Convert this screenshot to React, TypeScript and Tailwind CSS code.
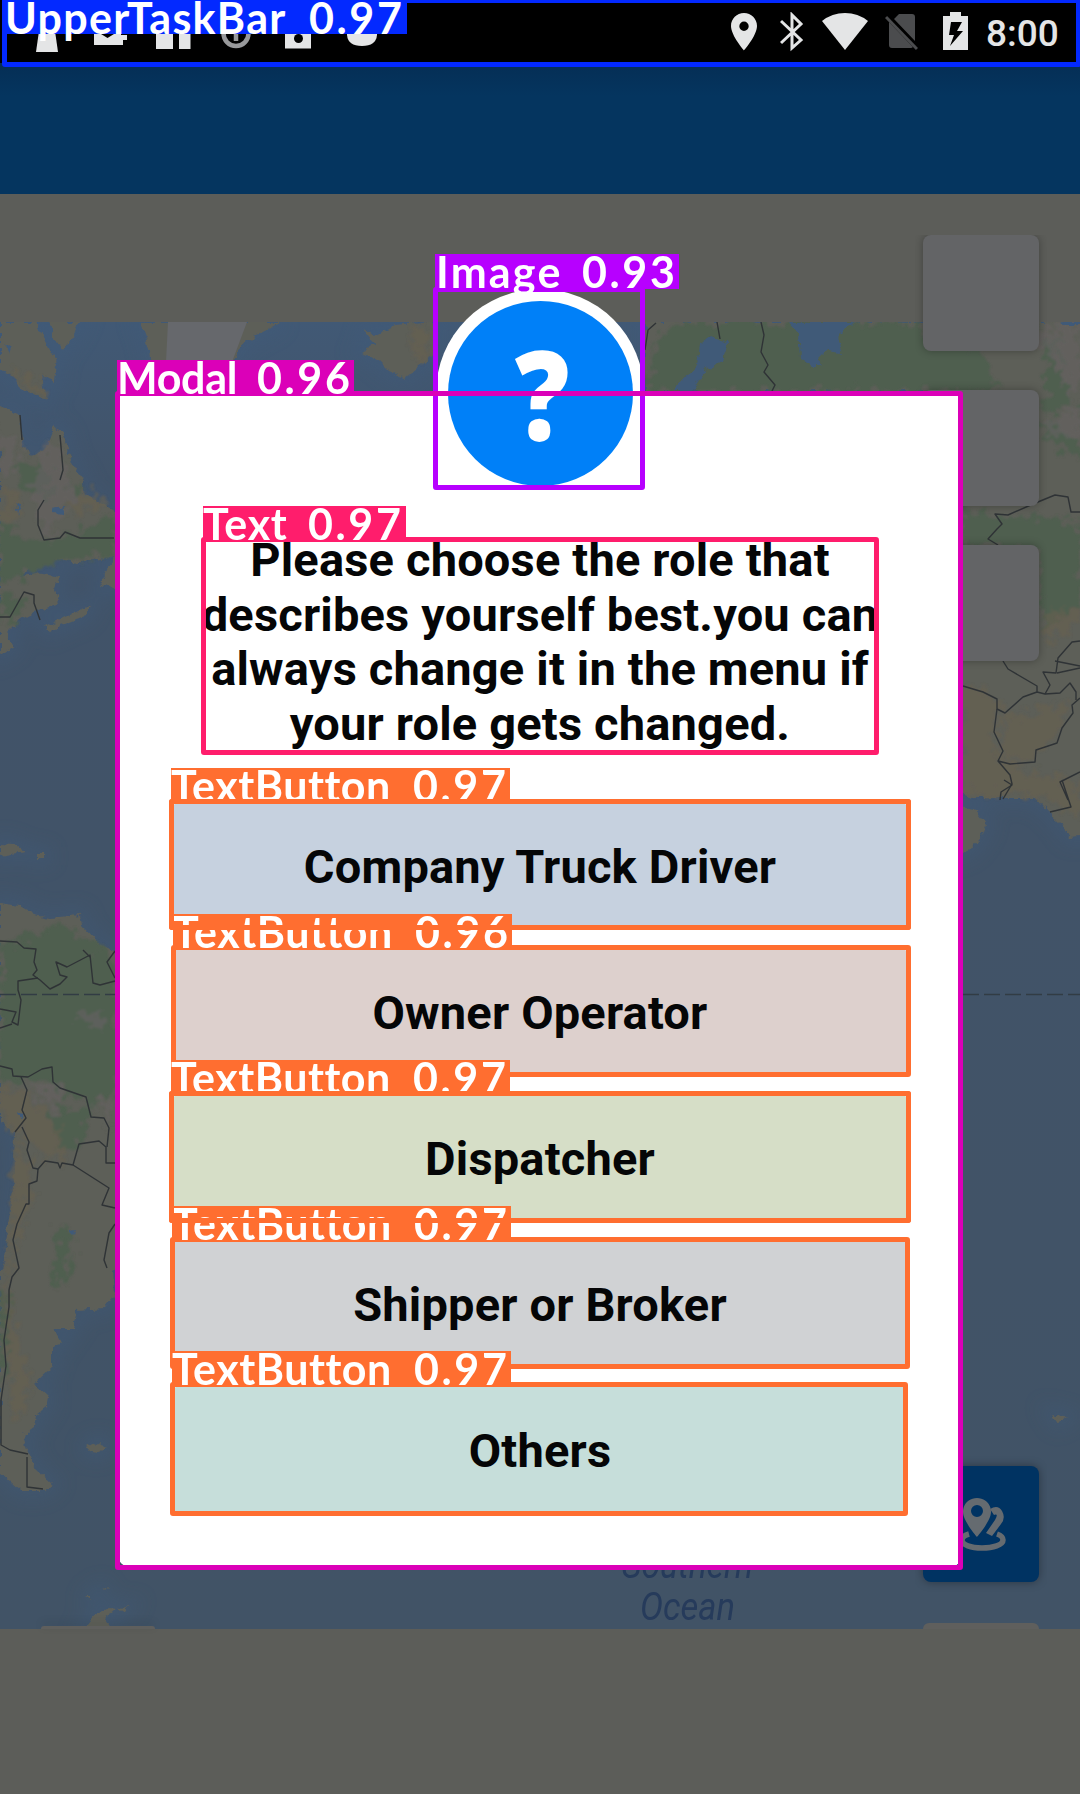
import React from "react";

const lands = [
  "M0 322H36L45 340 57 365 55 382 42 374 46 400 25 390 10 375 0 368Z",
  "M50 322H80L72 338 63 350 53 337Z",
  "M140 322H281L256 335 240 345 235 362H152L147 340Z",
  "M362 328L375 336 395 325 425 322 436 325V352L405 378 390 372 378 360 362 352 375 345Z",
  "M0 406L20 415 22 447 35 455 47 447 55 427 63 433 70 460 83 480V492L113 510 120 515V555L77 563 43 558 20 577 37 573 60 577 55 590 60 603 33 613 20 620 7 633 13 647 0 655Z",
  "M45 627L75 612 90 605 85 616 60 626 50 632Z",
  "M120 545L100 585 118 590Z",
  "M0 844L14 845 25 852 0 856Z",
  "M36 854H44V858H36Z",
  "M0 903L20 906 35 915 50 918 80 915 82 926 100 945 113 950 120 955V1265L112 1270 114 1295 104 1308 77 1310 73 1329 54 1329 62 1344 52 1348V1367L34 1384 48 1397 46 1408 36 1416 34 1427 23 1435 27 1450 36 1469 52 1484 43 1491 21 1491 0 1472V1273L5 1260 7 1233 13 1190 15 1133 0 1122Z",
  "M88 1447L97 1442 107 1446 100 1453 90 1452Z",
  "M84 1629L95 1615 107 1609 116 1610 104 1618 112 1629Z",
  "M118 1608L128 1607 124 1612Z",
  "M84 1597H92L90 1600Z",
  "M102 1589L108 1587 104 1591Z",
  "M1053 1414L1066 1417 1058 1422Z",
  "M645 322H1090V835L1070 837 1060 822 1047 810 1037 798H973L955 793V391H645Z",
  "M955 806L975 810 986 824 982 835 970 850 955 855Z",
];

const forests = [
  "M15 470L40 460 55 480 50 500 25 492Z",
  "M0 520L40 545 115 515V553L60 560 0 585Z",
  "M0 595L25 600 20 615 0 622Z",
  "M66 483L84 486 75 498Z",
  "M0 945L30 935 60 925 90 940 118 965V1090L90 1105 60 1090 40 1080 0 1080Z",
  "M50 1110L90 1110 80 1145 60 1150Z",
  "M58 1225L72 1235 68 1280 52 1290Z",
  "M0 1290L10 1300 6 1380 0 1390Z",
  "M662 330L690 322H790L920 325 980 350 1000 391H645Z",
  "M1045 345L1062 330 1058 370 1075 405 1045 412Z",
  "M1042 420L1080 440V460L1045 440Z",
  "M963 508L1000 515 1080 520V605L1042 630V548H963Z",
];

const dry = [
  "M15 370L40 380 45 398 25 388Z",
  "M0 490L20 495 15 520 0 525Z",
  "M70 495L90 490 105 505 75 515Z",
  "M410 330L425 325 430 350 415 365Z",
  "M0 1085L30 1095 60 1130 65 1165 40 1150 15 1133 0 1120Z",
  "M15 1140L30 1165 32 1195 18 1240 8 1300 30 1380 15 1430 5 1320 12 1230Z",
  "M963 680L1000 700 995 755 1030 775 1080 780V820L1040 795H963Z",
  "M1042 615L1080 605V625L1045 640Z",
  "M1000 720L1070 700 1055 740 1030 760 1005 760Z",
];

const settled = [
  "M0 430L18 440 20 470 0 468Z",
  "M45 440L60 445 75 500 50 535 30 500Z",
  "M78 1015L110 1010 95 1032Z",
  "M30 1090L65 1085 60 1110Z",
  "M98 1095L112 1100 108 1130Z",
  "M985 345L1080 322V370L1070 400 1050 350 1000 340Z",
  "M1045 430L1080 400V440Z",
];

const lakes = [
  "M712 336L728 343 723 361 707 368 693 391H674L697 365 700 345Z",
  "M788 322H853L837 338 842 353 827 351 817 361 823 366H812L800 357 798 334Z",
  "M53 508L63 506 62 514 54 513Z",
  "M16 503L20 506 18 514Z",
  "M5 343L12 348 10 354Z",
  "M68 1231L76 1230 73 1236Z",
  "M17 1112L26 1113 22 1118Z",
  "M1030 345L1034 340 1033 349Z",
  "M1060 322H1080V325H1066Z",
];

const borders = [
  "M0 617H10L24 592 34 595V603L40 620",
  "M20 415L22 440",
  "M44 500L38 510V525L44 540 60 538 65 532 80 538H114",
  "M60 435L63 470 60 480",
  "M0 941L17 942 24 948 36 949 34 962 37 970 33 975 40 980 50 989 60 984 67 977 60 975 56 962 67 967 90 955 93 983 100 985 115 981",
  "M38 978L18 981 18 990 21 1000 18 1025 12 1022 16 1012 0 1009",
  "M0 1028L12 1024",
  "M83 950L90 957M115 951L107 962 115 978",
  "M0 1066L12 1069 13 1076 28 1077 42 1069 52 1067 53 1082 60 1088 86 1097 91 1117 104 1118 109 1128 107 1147",
  "M21 1077L27 1090 22 1110 26 1118 15 1132M22 1127L29 1142 27 1150 33 1168 38 1169 45 1161 58 1163 60 1168 62 1163 73 1165 109 1188 102 1205 115 1208",
  "M73 1165L79 1144 99 1141 106 1147V1163H115",
  "M38 1169L37 1181 29 1184V1204H26L17 1224 13 1240 19 1268 12 1277 9 1290 9 1307 4 1340 6 1366 1 1400V1445L10 1450 28 1454M27 1457V1487L43 1489",
  "M115 1224L109 1233 104 1260 107 1268",
  "M645 350L648 330 656 323M717 322L720 339M761 322L764 335 761 352 768 365 764 372 775 385 772 391",
  "M998 545L988 539 997 529 1002 524 995 514 1008 515 1033 504 1055 495 1068 497 1071 512H1080",
  "M1003 661L1008 669 1037 686V692M963 686L983 692 997 699V709L1005 713 1023 697 1037 692 1045 694 1060 693 1070 683 1076 692V700",
  "M997 709L994 732 1003 751 998 761 1010 775 1012 784 1003 799M998 761L1010 764 1035 762 1036 750 1057 743 1062 728 1073 713 1072 705 1080 698",
  "M1045 694L1050 685 1043 672 1056 673 1058 658 1072 642 1080 641M1055 661L1080 666M1057 673L1080 668",
  "M1080 772L1060 782 1068 800M1004 780L1012 785 1001 792 1000 800M1062 780L1071 807 1050 812",
];

function WorldMap() {
  return (
    <svg className="block h-full w-full" viewBox="0 322 1080 1307" preserveAspectRatio="none">
      <defs>
        <linearGradient id="sea" x1="0" x2="0" y1="0" y2="1">
          <stop offset="0" stopColor="#415975" />
          <stop offset="0.12" stopColor="#415369" />
          <stop offset="1" stopColor="#415366" />
        </linearGradient>
        <filter id="soft" x="-20%" y="-20%" width="140%" height="140%"><feGaussianBlur stdDeviation="9" /></filter>
        <filter id="coast" x="-5%" y="-5%" width="110%" height="110%">
          <feTurbulence type="fractalNoise" baseFrequency="0.12" numOctaves="3" seed="4" />
          <feDisplacementMap in="SourceGraphic" scale="8" xChannelSelector="R" yChannelSelector="G" />
        </filter>
        <filter id="ragged" x="-5%" y="-5%" width="110%" height="110%">
          <feTurbulence type="fractalNoise" baseFrequency="0.1" numOctaves="4" seed="9" />
          <feDisplacementMap in="SourceGraphic" scale="30" xChannelSelector="R" yChannelSelector="G" />
          <feGaussianBlur stdDeviation="0.8" />
        </filter>
      </defs>
      <rect y="322" width="1080" height="1307" fill="url(#sea)" />
      <g filter="url(#soft)" fill="none" stroke="#405c7c" strokeWidth="14" opacity="0.4">
        {lands.map((d) => <path key={d} d={d} />)}
      </g>
      <g filter="url(#coast)" fill="#5d5f58">
        {lands.map((d) => <path key={d} d={d} />)}
      </g>
      <path d="M168 322H247L232 362H166Z" fill="#66686c" />
      <g filter="url(#ragged)">
        {forests.map((d) => <path key={d} d={d} fill="#4f5f50" />)}
        {dry.map((d) => <path key={d} d={d} fill="#675f4f" opacity="0.6" />)}
        {settled.map((d) => <path key={d} d={d} fill="#656261" opacity="0.65" />)}
      </g>
      <g filter="url(#coast)" fill="#415a78">
        {lakes.map((d) => <path key={d} d={d} />)}
      </g>
      <g fill="none" stroke="#2f3336" strokeWidth="1.4" strokeLinejoin="round">
        {borders.map((d) => <path key={d} d={d} />)}
        <path d="M0 994.5H115M963 994.5H1080" stroke="#323c44" strokeDasharray="16 5" />
      </g>
      <g fontFamily="Roboto" fontStyle="italic" fontSize="38" fill="#263b5b">
        <text x="622" y="1578" textLength="131" lengthAdjust="spacingAndGlyphs">Southern</text>
        <text x="640" y="1619.5" textLength="95" lengthAdjust="spacingAndGlyphs">Ocean</text>
      </g>
    </svg>
  );
}

function NotificationIcons() {
  return (
    <svg className="ml-[30px] h-[63px] w-[360px]" viewBox="30 0 360 63" fill="#e4e5e6">
      <path d="M40 24H54L58 52H36Z" />
      <path d="M94 22H121V45H94Z M119 35H127V40H123V45H119Z" />
      <path d="M101 34L107.500 38 114 34Z" fill="#000" />
      <path d="M156 20H173V49H156Z M179 20H190.500V49H179Z" />
      <g fill="none" stroke="#98999b" strokeWidth="4.500"><circle cx="236" cy="33.500" r="12.500" /><path d="M236 26V41" /></g>
      <path d="M285 22H311V48.500H285Z" />
      <circle cx="298.500" cy="38.500" r="4.500" fill="#000" />
      <path d="M347 24H377V35Q376 46 362 46T347 35Z" />
    </svg>
  );
}

function StatusIcons() {
  return (
    <div className="flex h-[63px] items-start pt-3 text-[#e4e5e6]">
      <svg className="mr-[23px] h-10 w-[26px]" viewBox="0 0 26 40" fill="currentColor">
        <path fillRule="evenodd" d="M13 1C5.800 1 0 6.800 0 14 0 23.500 13 38.500 13 38.500S26 23.500 26 14C26 6.800 20.200 1 13 1ZM13 9.500A4.700 4.700 0 1 1 13 18.900 4.700 4.700 0 0 1 13 9.500Z" />
      </svg>
      <svg className="mr-[18px] h-10 w-6" viewBox="0 0 24 40" fill="none" stroke="currentColor" strokeWidth="3">
        <path d="M1 9L21 28 12 36V3L21 12 1 31" />
      </svg>
      <svg className="mr-[17px] h-10 w-[46px]" viewBox="0 0 46 40" fill="currentColor">
        <path d="M0 9Q10 1 23 1T46 9L23 38Z" />
      </svg>
      <svg className="mr-[25px] h-10 w-[33px]" viewBox="0 0 33 40" fill="#4b4c4e">
        <path d="M9 7L14 2H27Q30 2 30 5V29Z M4 10L28 35Q27 36 26 36H7Q4 36 4 33Z" />
        <path d="M1 5L32 37" stroke="#4b4c4e" strokeWidth="3" />
      </svg>
      <svg className="mr-[18px] h-10 w-[25px]" viewBox="0 0 25 40" fill="currentColor">
        <path fillRule="evenodd" d="M7 0H18V4H25V38H0V4H7ZM8 10L6 23H11L7 34 20 19H14L19 10Z" />
      </svg>
      <span className="w-[94px] pt-[2px] text-[37px]/[40px] font-medium">8:00</span>
    </div>
  );
}

const tile = "h-[116px] w-[116px] rounded-lg bg-[#636466] shadow-[0_0_8px_rgba(0,0,0,0.3)]";

function MapControls() {
  return (
    <div className="absolute top-[235px] right-[41px] -mr-2 flex h-[1394px] flex-col gap-[39px] overflow-hidden px-2">
      <div className={tile} />
      <div className={tile} />
      <div className={tile} />
      <div className="mt-auto mb-[2px] flex h-[116px] w-[116px] items-center justify-center rounded-lg bg-[#003362] shadow-[0_0_10px_rgba(0,0,0,0.35)]">
        <svg className="ml-1 h-[54px] w-12" viewBox="0 0 48 54" fill="#656b70">
          <path fillRule="evenodd" d="M18 1C10 1 4 7 4 15 4 24 18 40 18 40S32 24 32 15C32 7 26 1 18 1ZM18 8A6 6 0 1 1 18 20 6 6 0 0 1 18 8Z" />
          <path d="M31 12Q39 7 43 14T42 27L33 39 27 36 36 23Q40 16 35 18Z" />
          <path d="M10 37Q3 39 3 43C3 48 12 51 23 51S44 48 44 43Q44 39 38 37" fill="none" stroke="#656b70" strokeWidth="5.500" />
        </svg>
      </div>
      <div className="h-[6px] w-[116px] rounded-t-lg bg-[#5f5f5d]" />
    </div>
  );
}

const roles = [
  ["Company Truck Driver", "bg-[#c6d1df]"],
  ["Owner Operator", "bg-[#ddd0cd]"],
  ["Dispatcher", "bg-[#d6dec7]"],
  ["Shipper or Broker", "bg-[#d0d2d4]"],
  ["Others", "bg-[#c6deda]"],
];

function RoleDialog() {
  return (
    <div className="absolute top-[391px] left-[118px] h-[1176px] w-[844px] rounded-xl bg-white px-[55px] text-center text-[47px] font-bold tracking-[0.18px] text-[#050607]">
      <div className="absolute -top-[102px] left-[318px] flex h-[208px] w-[208px] items-center justify-center rounded-full bg-white">
        <div className="flex h-[185px] w-[185px] items-center justify-center rounded-full bg-[#0080f8]">
          <span className="-mt-[3px] ml-1 scale-x-[0.87] font-['Open_Sans'] text-[124px]/[185px] font-extrabold text-white">?</span>
        </div>
      </div>
      <p className="-mx-5 pt-[142px] leading-[54.7px]">
        Please choose the role that<br />describes yourself best.you can<br />always change it in the menu if<br />your role gets changed.
      </p>
      <div className="mt-[50px] flex flex-col gap-[19px]">
        {roles.map(([name, color]) => (
          <button key={name} className={"flex h-[127px] items-center justify-center rounded-md pt-[3px] font-bold " + color}>
            {name}
          </button>
        ))}
      </div>
    </div>
  );
}

type Detection = { name: string; score: string; frame: string; tag: string; text: string };

const orange = "border-[#ff6e30]";
const detections: Detection[] = [
  { name: "UpperTaskBar", score: "0.97", frame: "left-[2px] top-[-2px] w-[1079px] h-[69px] border-[#0329ff]", tag: "left-[2px] top-0 w-[405px] h-[34px] pl-[3px] bg-[#0329ff]", text: "w-[304px] tracking-[1.3px]" },
  { name: "Image", score: "0.93", frame: "left-[433px] top-[287px] w-[212px] h-[203px] border-[#b700ff]", tag: "left-[435px] top-[254px] w-[244px] h-[35px] pl-px bg-[#b700ff]", text: "w-[146px] tracking-[2.2px]" },
  { name: "Modal", score: "0.96", frame: "left-[115px] top-[391px] w-[848px] h-[1179px] border-[#db00b8]", tag: "left-[117px] top-[360px] w-[237px] h-[34px] bg-[#db00b8]", text: "w-[140px] tracking-[-0.3px]" },
  { name: "Text", score: "0.97", frame: "left-[201px] top-[537px] w-[678px] h-[218px] border-[#ff1d6c]", tag: "left-[203px] top-[506px] w-[203px] h-[33px] bg-[#ff1d6c]", text: "w-[105px] tracking-[0.7px]" },
  { name: "TextButton", score: "0.97", frame: "left-[169px] top-[799px] w-[742px] h-[131px] " + orange, tag: "left-[171px] top-[768px] w-[339px] h-[33px] bg-[#ff6e30]", text: "w-[242px] tracking-[0.5px]" },
  { name: "TextButton", score: "0.96", frame: "left-[171px] top-[945px] w-[740px] h-[132px] " + orange, tag: "left-[173px] top-[914px] w-[339px] h-[33px] bg-[#ff6e30]", text: "w-[242px] tracking-[0.5px]" },
  { name: "TextButton", score: "0.97", frame: "left-[169px] top-[1091px] w-[742px] h-[132px] " + orange, tag: "left-[171px] top-[1060px] w-[339px] h-[33px] bg-[#ff6e30]", text: "w-[242px] tracking-[0.5px]" },
  { name: "TextButton", score: "0.97", frame: "left-[170px] top-[1237px] w-[740px] h-[132px] " + orange, tag: "left-[172px] top-[1206px] w-[339px] h-[33px] bg-[#ff6e30]", text: "w-[242px] tracking-[0.5px]" },
  { name: "TextButton", score: "0.97", frame: "left-[170px] top-[1382px] w-[738px] h-[134px] " + orange, tag: "left-[172px] top-[1351px] w-[339px] h-[33px] bg-[#ff6e30]", text: "w-[242px] tracking-[0.5px]" },
];

/* Frames whose bottom edge crosses the tag of the next button. */
const raised = [detections[4], detections[6]];

function Tag({ d }: { d: Detection }) {
  return (
    <div className={"absolute flex whitespace-nowrap font-['Lato'] text-[43px]/[35px] font-bold text-white " + d.tag}>
      <span className={"shrink-0 " + d.text}>{d.name}</span>
      <span className="tracking-[2.6px]">{d.score}</span>
    </div>
  );
}

export default function App() {
  return (
    <div className="relative h-[1794px] w-[1080px] overflow-hidden bg-[#5c5d59] font-['Roboto',sans-serif]">
      <div className="flex h-full flex-col">
        <header className="flex h-[63px] shrink-0 justify-between bg-black">
          <NotificationIcons />
          <StatusIcons />
        </header>
        <div className="h-[131px] shrink-0 bg-linear-to-b from-[#052e55] to-[#05355f] to-25%" />
        <div className="h-[128px] shrink-0" />
        <div className="h-[1307px] shrink-0"><WorldMap /></div>
      </div>
      <div className="absolute top-[1626px] left-[41px] h-[3px] w-[114px] rounded-t-lg bg-[#5f5f5d] shadow-[0_-3px_8px_rgba(0,0,0,0.15)]" />
      <MapControls />
      <RoleDialog />
      {detections.map((d, i) => (
        <React.Fragment key={i}>
          <div className={"absolute rounded-[3px] border-5 " + d.frame} />
          <Tag d={d} />
        </React.Fragment>
      ))}
      {raised.map((d, i) => <div key={i} className={"absolute rounded-[3px] border-5 " + d.frame} />)}
    </div>
  );
}
